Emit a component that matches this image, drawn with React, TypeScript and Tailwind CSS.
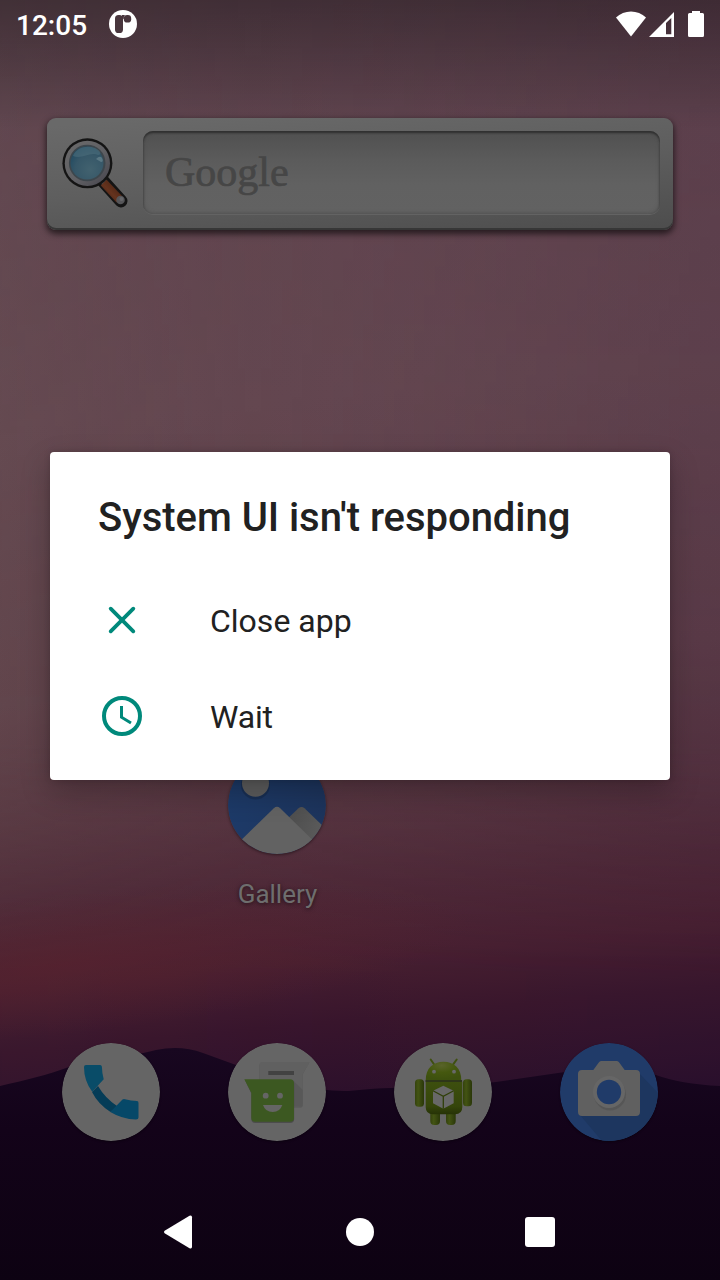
import type { ReactNode } from "react";

function Wallpaper() {
  return (
    <svg className="absolute inset-0 h-full w-full" viewBox="0 0 720 1280" aria-hidden="true">
      <defs>
        <linearGradient id="sky" gradientUnits="userSpaceOnUse" x1="360" y1="0" x2="465" y2="1110">
          <stop offset="0" stopColor="#5b424d" />
          <stop offset="0.12" stopColor="#60454f" />
          <stop offset="0.35" stopColor="#634750" />
          <stop offset="0.6" stopColor="#5e4049" />
          <stop offset="0.71" stopColor="#55343f" />
          <stop offset="0.79" stopColor="#4c2736" />
          <stop offset="0.855" stopColor="#461e30" />
          <stop offset="0.91" stopColor="#38152c" />
          <stop offset="1" stopColor="#280e2b" />
        </linearGradient>
        <linearGradient id="side" x1="0" y1="0" x2="1" y2="0">
          <stop offset="0" stopColor="#6d5656" stopOpacity="0.25" />
          <stop offset="0.35" stopColor="#6a4652" stopOpacity="0.12" />
          <stop offset="1" stopColor="#4a2840" stopOpacity="0.3" />
        </linearGradient>
        <linearGradient id="sideFade" x1="0" y1="0" x2="0" y2="1">
          <stop offset="0" stopColor="#fff" stopOpacity="0.6" />
          <stop offset="0.58" stopColor="#fff" />
          <stop offset="0.76" stopColor="#fff" stopOpacity="0.15" />
        </linearGradient>
        <mask id="sideMask">
          <rect width="720" height="1280" fill="url(#sideFade)" />
        </mask>
        <radialGradient id="glow" gradientUnits="userSpaceOnUse" cx="0" cy="0" r="1" gradientTransform="translate(60 965) rotate(-6) scale(420 70)">
          <stop offset="0" stopColor="#5c222c" stopOpacity="0.55" />
          <stop offset="1" stopColor="#5c222c" stopOpacity="0" />
        </radialGradient>
        <linearGradient id="shade" x1="0" y1="0" x2="0" y2="1">
          <stop offset="0" stopColor="#000" stopOpacity="0.3" />
          <stop offset="1" stopColor="#000" stopOpacity="0" />
        </linearGradient>
        <linearGradient id="hill" x1="0" y1="0" x2="0" y2="1">
          <stop offset="0" stopColor="#180720" />
          <stop offset="0.35" stopColor="#130319" />
          <stop offset="1" stopColor="#0d0212" />
        </linearGradient>
      </defs>
      <rect width="720" height="1280" fill="url(#sky)" />
      <rect width="720" height="1280" fill="url(#side)" mask="url(#sideMask)" />
      <rect y="820" width="720" height="280" fill="url(#glow)" />
      <rect width="720" height="130" fill="url(#shade)" />
      <path
        d="M0 1086 C25 1080 48 1075 69 1067 C105 1057 135 1056 156 1050 Q181 1045 203 1053 L236 1065 C265 1080 310 1092 349 1091 C390 1086 445 1088 496 1082 L565 1072 C600 1063 635 1070 656 1075 Q680 1084 720 1086 V1280 H0Z"
        fill="url(#hill)"
      />
    </svg>
  );
}

function StatusBar() {
  return (
    <header className="flex h-12 shrink-0 items-center pl-4 pr-4 pt-[2px] text-white">
      <span className="w-[93px] pt-[2px] text-[28px] font-medium leading-none">12:05</span>
      <svg className="-mt-[2px] h-7 w-7" viewBox="0 0 28 28">
        <circle cx="14" cy="14" r="14" fill="#fff" />
        <rect x="6" y="5" width="8" height="18" rx="3.6" fill="#49363d" />
        <path d="M13 5H16Q14.700 6 14.700 9H13Z" fill="#49363d" />
        <rect x="14.8" y="5" width="7.4" height="7.6" rx="3.4" fill="#49363d" />
      </svg>
      <svg className="-mt-[2px] ml-auto h-[26px] w-[88px]" viewBox="0 0 88 26" fill="#fff">
        <path d="M0 6.5 C8-1.5 22-1.5 30 6.5 L15 25.5Z" />
        <path fillRule="evenodd" d="M58 1V26H33ZM55.300 7L50 12V23.300H55.300Z" />
        <path d="M76 2V0H84V2H86.5Q88 2 88 3.5V24.5Q88 26 86.5 26H73.5Q72 26 72 24.5V3.5Q72 2 73.5 2Z" />
      </svg>
    </header>
  );
}

function Magnifier() {
  return (
    <svg className="h-[76px] w-[70px]" viewBox="60 135 70 76">
      <defs>
        <radialGradient id="lens" cx="0.6" cy="0.7" r="0.75">
          <stop offset="0" stopColor="#42626f" />
          <stop offset="0.6" stopColor="#365768" />
          <stop offset="1" stopColor="#1f4960" />
        </radialGradient>
        <linearGradient id="rim" x1="0" y1="0" x2="1" y2="1">
          <stop offset="0" stopColor="#6a6a6a" />
          <stop offset="0.55" stopColor="#606064" />
          <stop offset="1" stopColor="#45444c" />
        </linearGradient>
        <linearGradient id="grip" x1="0" y1="1" x2="1" y2="0">
          <stop offset="0" stopColor="#32170c" />
          <stop offset="0.45" stopColor="#65331e" />
          <stop offset="1" stopColor="#3b1a0c" />
        </linearGradient>
      </defs>
      <path d="M103 181L121 201" stroke="#141414" strokeWidth="13" strokeLinecap="round" />
      <path d="M102.500 180.500L107 185.500" stroke="#4c4c4f" strokeWidth="6.500" />
      <path d="M100.800 185.500L106.600 179.800L122.500 196.500L116.500 202.500Z" fill="url(#grip)" />
      <circle cx="120.500" cy="200" r="4.300" fill="#555558" />
      <circle cx="121.500" cy="199" r="2" fill="#68686b" />
      <circle cx="87.400" cy="163.300" r="25" fill="#141414" />
      <circle cx="87.400" cy="163.300" r="22.600" fill="url(#rim)" />
      <circle cx="87.200" cy="163" r="18.300" fill="#3d464c" />
      <circle cx="87" cy="163" r="16.500" fill="url(#lens)" />
      <path d="M73 156C76 148 86 145 95 148C101 151 102 155 98 155C90 151 82 160 73 156Z" fill="#4d6e7c" opacity="0.6" />
      <path d="M96 159Q100 155 102 158Q104 162 101 162Z" fill="#597783" />
    </svg>
  );
}

function SearchWidget() {
  return (
    <section className="mx-[47px] mt-[70px] flex h-28 shrink-0 items-start rounded-[9px] bg-[linear-gradient(175deg,#696969_5%,#5e5e5e_50%,#4d4d4d_100%)] pl-[13px] pr-[13px] pt-[13px] shadow-[inset_0_-2px_0_#373737,0_3px_6px_1px_rgba(0,0,0,0.6)]">
      <div className="mt-1 w-[83px]">
        <Magnifier />
      </div>
      <div className="flex h-[83px] flex-1 items-center rounded-[10px] bg-[linear-gradient(180deg,#505050_0%,#5b5b5b_35%,#616161_65%,#626262_100%)] pl-[22px] shadow-[inset_0_2px_2px_#303030,inset_0_0_4px_#4a4a4a,0_1px_0_#636363]">
        <span className="-mt-[1px] font-['Liberation_Serif',serif] text-[42px] leading-none text-[#464646] [-webkit-text-stroke:0.7px_#464646]">Google</span>
      </div>
    </section>
  );
}

function GalleryIcon() {
  return (
    <svg className="h-[98px] w-[98px] rounded-full shadow-[0_1px_3px_rgba(0,0,0,0.45)]" viewBox="0 0 98 98">
      <defs>
        <clipPath id="round"><circle cx="49" cy="49" r="49" /></clipPath>
        <linearGradient id="far" x1="0" y1="0" x2="1" y2="0.3">
          <stop offset="0.2" stopColor="#4e4e4e" />
          <stop offset="1" stopColor="#5b5b5b" />
        </linearGradient>
        <linearGradient id="dusk" x1="0" y1="0" x2="1" y2="0">
          <stop offset="0" stopColor="#1d3a68" />
          <stop offset="1" stopColor="#1d345c" />
        </linearGradient>
      </defs>
      <g clipPath="url(#round)">
        <rect width="98" height="98" fill="url(#dusk)" />
        <circle cx="27.500" cy="29" r="14.500" fill="#15294a" opacity="0.6" />
        <circle cx="27.500" cy="27.300" r="13.500" fill="#5d5d5d" />
        <path d="M55 67L70.500 52.200Q73.500 50 76.500 52.200L98 73V98H70Z" fill="url(#far)" />
        <path d="M0 97L45.800 52.200Q49 49.500 52.200 52.200L98 97V98H0Z" fill="#626262" />
      </g>
    </svg>
  );
}

function DockIcon({ color, children }: { color: string; children: ReactNode }) {
  return (
    <svg className="h-[98px] w-[98px] rounded-full shadow-[0_1px_2px_rgba(0,0,0,0.35)]" viewBox="0 0 98 98">
      <circle cx="49" cy="49" r="49" fill={color} />
      {children}
    </svg>
  );
}

function Dock() {
  return (
    <nav className="mx-[62px] mt-[130px] flex shrink-0 justify-between">
      <DockIcon color="#656565">
        <path d="M30 49L36 43Q43 55 55 63L48.500 69Q36 61 30 49Z" fill="#053c57" />
        <path d="M24 22H38Q40 22 40 25Q40 30 41.700 36.300L30.200 48.700Q22 38 22 24Q22 22 24 22Z" fill="#094c68" />
        <path d="M48.300 68.900L60.500 56.500Q61.500 55.800 63 56.200Q69 58 75 58Q76.500 58 76.500 60V74.500Q76.500 76.500 74 76.500Q60 76 48.300 68.900Z" fill="#064868" />
      </DockIcon>
      <DockIcon color="#656565">
        <path d="M31.300 22Q31.300 19 34.500 19H81L75 30V61Q75 64 72 64H34Q31.300 64 31.300 61Z" fill="#505050" opacity="0.5" transform="translate(0 0.700)" />
        <path d="M31.300 22Q31.300 19 34.500 19H81.700L74.700 31V60.500Q74.700 63.500 71.700 63.500H34Q31.300 63.500 31.300 61Z" fill="#606060" />
        <path d="M64.500 36.800L74.700 47V60.500Q74.700 63.500 71.700 63.500H66V38Z" fill="#585858" />
        <rect x="40.300" y="28" width="25.700" height="4" fill="#424242" />
        <path d="M17 37.300H62Q66.200 37.300 66.200 41V76Q66.200 80 62 80H27.500Q23.300 80 23.300 76V50.500Z" fill="#333" opacity="0.5" />
        <path d="M16.300 36.300H62Q66 36.300 66 40.300V74.700Q66 78.700 62 78.700H27.300Q23.300 78.700 23.300 74.700V49.700Z" fill="#3c5821" />
        <circle cx="37.700" cy="52.700" r="2.900" fill="#656565" />
        <circle cx="52" cy="52.700" r="2.900" fill="#656565" />
        <path d="M35 62H54.300Q52 69 44.700 69Q37.300 69 35 62Z" fill="#656565" />
      </DockIcon>
      <DockIcon color="#656565">
        <defs>
          <linearGradient id="limb" x1="0" y1="0" x2="1" y2="0">
            <stop offset="0" stopColor="#34420d" />
            <stop offset="0.35" stopColor="#435413" />
            <stop offset="1" stopColor="#2a3709" />
          </linearGradient>
          <linearGradient id="torso" x1="0" y1="0" x2="0" y2="1">
            <stop offset="0" stopColor="#3d4f0e" />
            <stop offset="0.75" stopColor="#35450b" />
            <stop offset="1" stopColor="#263206" />
          </linearGradient>
          <radialGradient id="head" cx="0.45" cy="0.2" r="0.75">
            <stop offset="0" stopColor="#59632a" />
            <stop offset="0.5" stopColor="#45580f" />
            <stop offset="1" stopColor="#3d500e" />
          </radialGradient>
        </defs>
        <path d="M36.700 16.500L41 22.700M62.700 16.500L58.300 22.700" stroke="#3f5010" strokeWidth="2" strokeLinecap="round" />
        <rect x="36.300" y="60" width="9.700" height="22" rx="4" fill="url(#limb)" />
        <rect x="52" y="60" width="9.700" height="22" rx="4" fill="url(#limb)" />
        <rect x="21" y="36.300" width="9" height="27.500" rx="3.500" fill="url(#limb)" />
        <rect x="69" y="36.300" width="9" height="27" rx="3.500" fill="url(#limb)" />
        <path d="M31.700 38.700H68.300V64Q68.300 71.300 61 71.300H39Q31.700 71.300 31.700 64Z" fill="url(#torso)" />
        <path d="M31.700 37.300C31.700 25 39 18.700 49.500 18.700C60 18.700 67.300 25 67.300 37.300Z" fill="url(#head)" />
        <path d="M31.500 38H68" stroke="#1f2907" strokeWidth="1.400" />
        <circle cx="40" cy="28.700" r="1.900" fill="#686868" />
        <circle cx="60" cy="28.700" r="1.900" fill="#686868" />
        <path d="M49.300 42.700L59.700 47.700V60.300L49.300 65.700L39 60.300V47.700Z" fill="#686868" />
        <path d="M39 47.700L49.300 53.300L59.700 47.700M49.300 53.300V65.700" fill="none" stroke="#303f09" strokeWidth="1.300" />
      </DockIcon>
      <DockIcon color="#203b69">
        <path d="M79 30L98 50A49 49 0 0 1 42 98L20 72L49 50Z" fill="#1d365f" />
        <path d="M18 31Q18 27 22 27H33.300L39 19.300Q40 18 41.500 18H56.500Q58 18 59 19.300L64.700 27H76Q80 27 80 31V69Q80 73 76 73H22Q18 73 18 69Z" fill="#606060" />
        <circle cx="50" cy="51.500" r="16" fill="#4c4c4c" opacity="0.45" />
        <circle cx="49" cy="49" r="16" fill="#666" />
        <circle cx="49" cy="49" r="12.200" fill="#203b69" />
      </DockIcon>
    </nav>
  );
}

function NavigationBar() {
  return (
    <footer className="mt-auto flex h-24 shrink-0 items-center justify-between pl-[162px] pr-[165px]">
      <svg className="h-9 w-8" viewBox="0 0 32 36" fill="#fff">
        <path d="M2.600 16.700L27.500 1.700Q30 .7 30 3.200V32.800Q30 35.300 27.500 34.300L2.600 19.300Q1.300 18 2.600 16.700Z" />
      </svg>
      <span className="h-7 w-7 rounded-full bg-white" />
      <span className="h-[30px] w-[30px] rounded-[3px] bg-white" />
    </footer>
  );
}

function AnrDialog() {
  return (
    <div
      role="dialog"
      className="absolute left-[50px] top-[452px] flex h-[328px] w-[620px] flex-col rounded-[4px] bg-white px-12 pb-4 text-[#212121] shadow-[0_12px_30px_0_rgba(0,0,0,0.24),0_0_6px_rgba(0,0,0,0.16)]"
    >
      <h1 className="flex h-[120px] items-center whitespace-nowrap pt-[11px] text-[40px] font-medium leading-none tracking-[-0.04px]">System UI isn't responding</h1>
      <button className="flex h-24 items-center gap-16 text-left text-[32px] leading-none">
        <svg className="h-12 w-12" viewBox="0 0 48 48" fill="none" stroke="#00897b" strokeWidth="3.800" strokeLinecap="round">
          <path d="M12.700 12.700L35.300 35.300M35.300 12.700L12.700 35.300" />
        </svg>
        <span className="pt-[2px]">Close app</span>
      </button>
      <button className="flex h-24 items-center gap-16 text-left text-[32px] leading-none">
        <svg className="h-12 w-12" viewBox="0 0 48 48" fill="none" stroke="#00897b">
          <circle cx="24" cy="24" r="18" strokeWidth="4" />
          <path d="M23.500 14V25.200L33 31" strokeWidth="3" />
        </svg>
        <span className="pt-[2px] tracking-[-0.2px]">Wait</span>
      </button>
    </div>
  );
}

export default function App() {
  return (
    <main className="relative h-[1280px] w-[720px] overflow-hidden bg-[#130319] font-[Roboto,sans-serif]">
      <Wallpaper />
      <div className="relative flex h-full flex-col">
        <StatusBar />
        <SearchWidget />
        <div className="ml-[194px] mt-[526px] flex w-[166px] shrink-0 flex-col items-center">
          <GalleryIcon />
          <span className="mb-[3px] ml-[1px] mt-6 text-[26px] leading-8 text-[#6e6e6e] [text-shadow:0_1px_4px_rgba(0,0,0,0.6)]">Gallery</span>
        </div>
        <Dock />
        <NavigationBar />
      </div>
      <AnrDialog />
    </main>
  );
}
